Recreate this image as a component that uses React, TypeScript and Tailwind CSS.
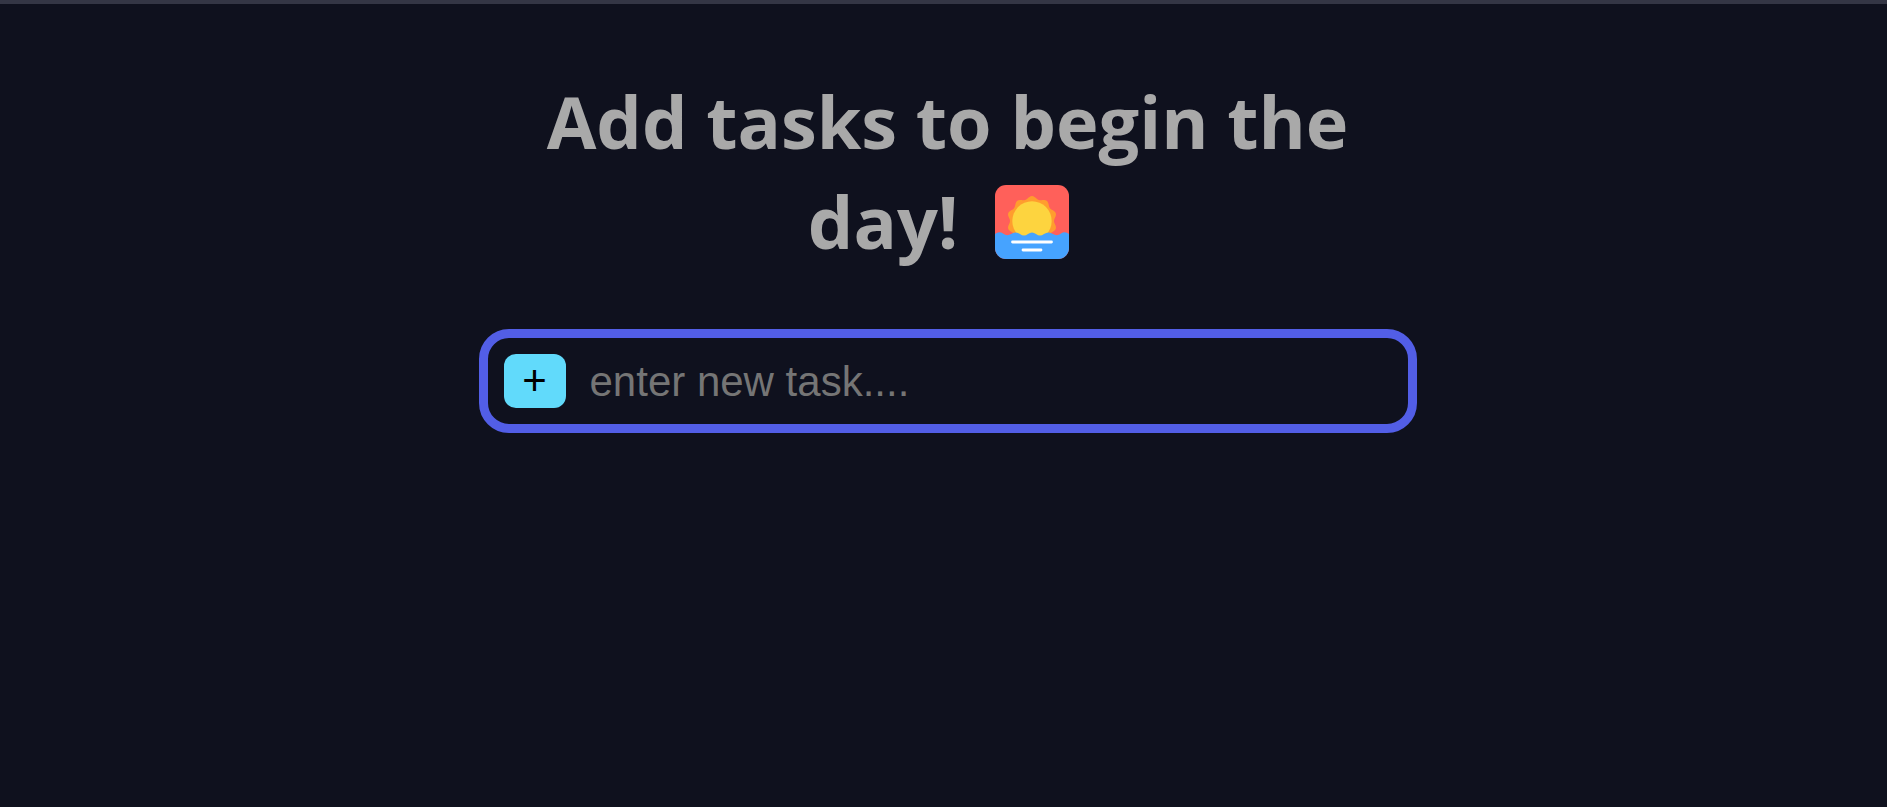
import React, { useState } from "react";

// Outline of the sun's corona: a circle whose radius swells into ten petals.
const corona =
  Array.from({ length: 120 }, (_, i) => {
    const angle = (i * 2 * Math.PI) / 120;
    const radius = 23.5 + 1.5 * Math.cos(angle * 10);
    const x = 37 + radius * Math.sin(angle);
    const y = 36 - radius * Math.cos(angle);
    return `${i === 0 ? "M" : "L"}${x.toFixed(2)} ${y.toFixed(2)}`;
  }).join("") + "Z";

function SunriseIcon() {
  return (
    <svg
      viewBox="0 0 74 74"
      role="img"
      aria-label="Sunrise"
      className="mx-[18px] inline-block h-[74px] w-[74px] align-[-10px]"
    >
      <defs>
        <clipPath id="tile">
          <rect width="74" height="74" rx="11" />
        </clipPath>
      </defs>
      <g clipPath="url(#tile)">
        <rect width="74" height="74" fill="#ff605a" />
        <path d={corona} fill="#ff9d2e" />
        <circle cx="37" cy="36" r="19.7" fill="#fdd43f" />
        <path
          d="M0 49Q4 46 8 48.500Q12 51.500 16 49Q20.500 46 25 49Q29 52 33 49Q37 46 41 49Q45 52 49 49Q53.500 46 58 49Q62 51.500 66 48.500Q70 46 74 49V74H0Z"
          fill="#46a3ff"
        />
        <path d="M17.500 57H56.500M28 65H46" stroke="#fff" strokeWidth="2.800" strokeLinecap="round" />
      </g>
    </svg>
  );
}

export default function App() {
  const [task, setTask] = useState("");
  return (
    <div className="min-h-screen border-t-4 border-[#343645] bg-[#0f111e] pl-2">
      <main className="mx-auto flex w-full max-w-[938px] flex-col gap-[58px] pt-[67px]">
        <h1 className="px-8 text-center font-['Open_Sans','Noto_Sans',sans-serif] text-[72px] leading-[100px] font-bold text-[#a9a9a9]">
          Add tasks to begin the day! <SunriseIcon />
        </h1>
        <form
          onSubmit={(e) => e.preventDefault()}
          className="flex items-center gap-6 rounded-[30px] border-[9px] border-[#525ee6] p-4 font-['Liberation_Sans',Arial,sans-serif]"
        >
          <button
            type="submit"
            aria-label="Add task"
            className="flex h-[54px] w-[62px] shrink-0 items-center justify-center rounded-xl bg-[#61dafb] text-[42px] leading-[54px] text-black"
          >
            +
          </button>
          <input
            type="text"
            aria-label="New task"
            placeholder="enter new task...."
            value={task}
            onChange={(e) => setTask(e.target.value)}
            className="h-[54px] min-w-0 flex-1 bg-transparent text-[42px] text-[#a9a9a9] outline-none placeholder:text-[#757575]"
          />
        </form>
      </main>
    </div>
  );
}
